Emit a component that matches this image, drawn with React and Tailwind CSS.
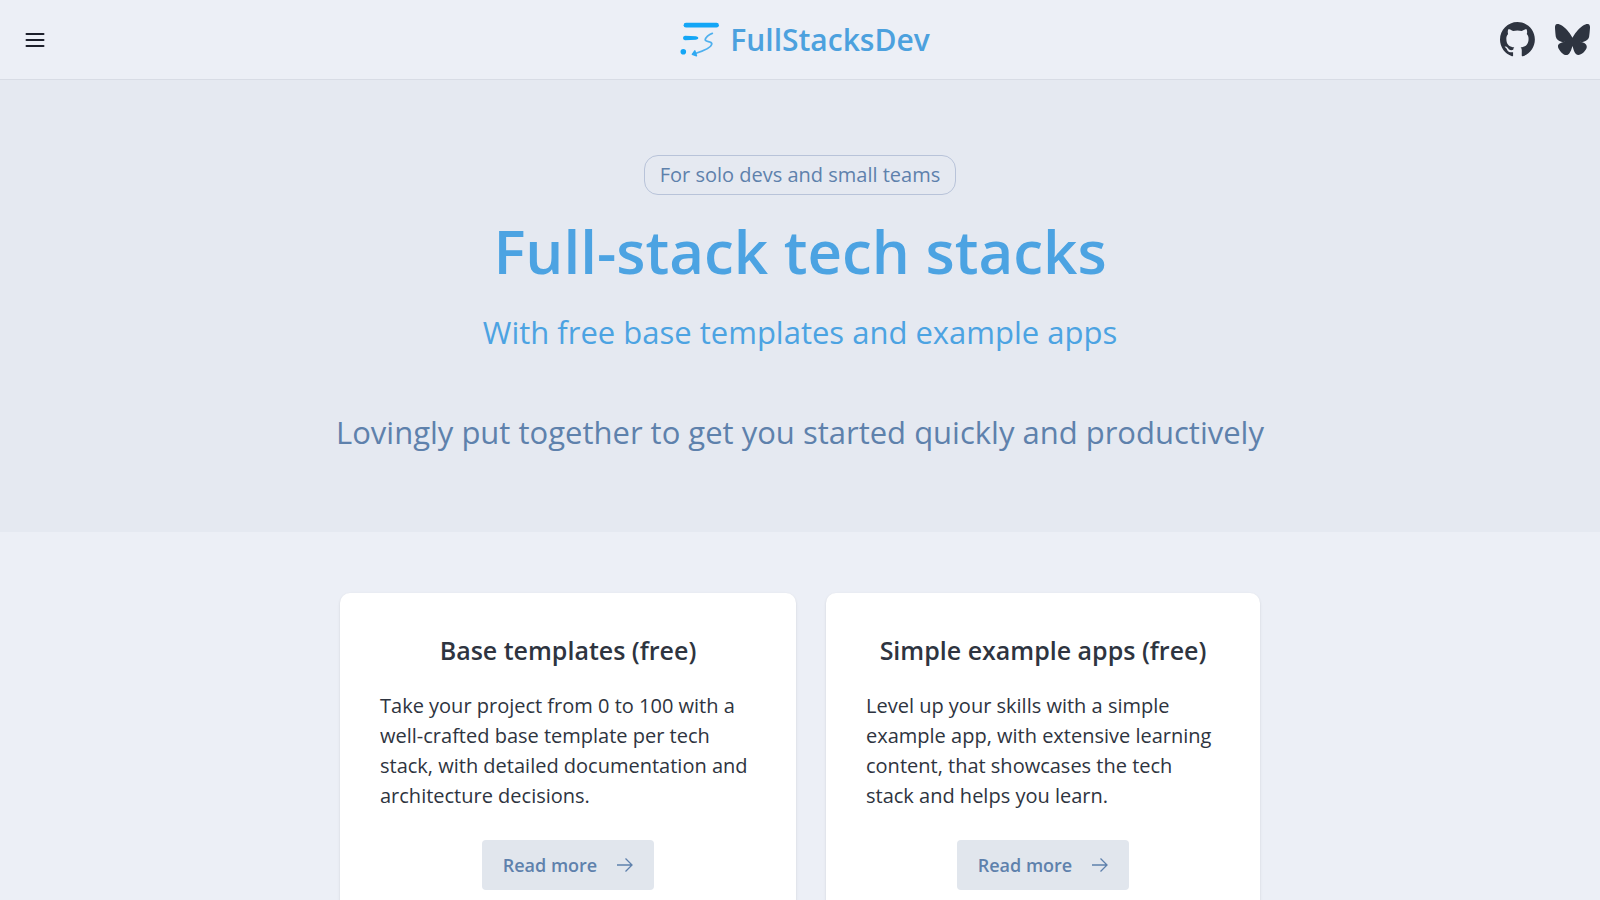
import { FaBluesky } from "react-icons/fa6";

const cards = [
  {
    title: "Base templates (free)",
    text: "Take your project from 0 to 100 with a well-crafted base template per tech stack, with detailed documentation and architecture decisions.",
  },
  {
    title: "Simple example apps (free)",
    text: "Level up your skills with a simple example app, with extensive learning content, that showcases the tech stack and helps you learn.",
  },
];

function Logo() {
  return (
    <svg viewBox="0 0 40 36" className="h-9 w-10" fill="none" strokeLinecap="round" aria-hidden="true">
      <path d="M6 3.200H36.500" stroke="#13a6f6" strokeWidth="4.800" />
      <path d="M5 13.700L16 14.300Q18.400 14.800 18.400 16Q18.400 17.200 16 17.700L5 18.200Q3 18 3 16Q3 14 5 13.700Z" fill="#13a6f6" />
      <circle cx="3.300" cy="29.800" r="2.800" fill="#13a6f6" />
      <path d="M32.300 11.300C29 12.300 25.200 15.500 25.200 18C26 20.300 31.500 18.800 31.800 21.800C31.500 26 22 29.500 14 32" stroke="#4fb0ee" strokeWidth="1.800" />
      <path d="M14.800 28.800L12.300 32.300L16.500 33.800Z" fill="#2fa9f2" stroke="#2fa9f2" strokeWidth="1.400" strokeLinejoin="round" />
    </svg>
  );
}

function GitHubMark() {
  return (
    <svg viewBox="0 0 98 98" className="size-[35px]" fill="currentColor" aria-hidden="true">
      <path
        fillRule="evenodd"
        clipRule="evenodd"
        d="M48.854 0C21.839 0 0 22 0 49.217c0 21.756 13.993 40.172 33.405 46.69 2.427.49 3.316-1.059 3.316-2.362 0-1.141-.08-5.052-.08-9.127-13.59 2.934-16.42-5.867-16.42-5.867-2.184-5.704-5.42-7.17-5.42-7.17-4.448-3.015.324-3.015.324-3.015 4.934.326 7.523 5.052 7.523 5.052 4.367 7.496 11.404 5.378 14.235 4.074.404-3.178 1.699-5.378 3.074-6.6-10.839-1.141-22.243-5.378-22.243-24.283 0-5.378 1.94-9.778 5.014-13.2-.485-1.222-2.184-6.275.486-13.038 0 0 4.125-1.304 13.426 5.052a46.97 46.97 0 0 1 12.214-1.63c4.125 0 8.33.571 12.213 1.63 9.302-6.356 13.427-5.052 13.427-5.052 2.67 6.763.97 11.816.485 13.038 3.155 3.422 5.015 7.822 5.015 13.2 0 18.905-11.404 23.06-22.324 24.283 1.78 1.548 3.316 4.481 3.316 9.126 0 6.6-.08 11.897-.08 13.526 0 1.304.89 2.853 3.316 2.364 19.412-6.52 33.405-24.935 33.405-46.691C97.707 22 75.788 0 48.854 0z"
      />
    </svg>
  );
}

function Card({ title, text }) {
  return (
    <article className="flex flex-col items-center rounded-[10px] bg-white p-10 shadow-sm">
      <h3 className="text-center text-[25px] leading-[34px] font-semibold">{title}</h3>
      <p className="mt-6 self-stretch text-xl leading-[30px]">{text}</p>
      <a href="#more" className="mt-[29px] flex h-[50px] items-center gap-5 rounded bg-[#e1e6ed] px-[21px] text-lg font-semibold text-[#5e81ac]">
        Read more
        <svg viewBox="0 0 16 16" className="size-4" fill="none" stroke="currentColor" strokeWidth="1.300" aria-hidden="true">
          <path d="M0 8H15M8.500 1.500L15 8L8.500 14.500" />
        </svg>
      </a>
    </article>
  );
}

export default function App() {
  return (
    <div className="min-h-screen bg-[#eceff6] font-['Open_Sans',sans-serif] text-[#2e3440]">
      <header className="grid h-20 grid-cols-[1fr_auto_1fr] items-center border-b border-[#d8dce5] pr-[10px] pl-5">
        <button type="button" aria-label="Open menu" className="flex size-[30px] items-center justify-center">
          <svg viewBox="0 0 20 18" className="h-[18px] w-5" stroke="#1c1f2b" strokeWidth="2" strokeLinecap="round" aria-hidden="true">
            <path d="M1.500 3H18.500M1.500 9H18.500M1.500 15H18.500" />
          </svg>
        </button>
        <a href="#home" className="flex items-center gap-[10px] text-3xl font-semibold text-[#4ca1de]">
          <Logo />
          FullStacksDev
        </a>
        <nav className="flex items-center justify-end gap-5">
          <a href="#github" aria-label="GitHub"><GitHubMark /></a>
          <a href="#bluesky" aria-label="Bluesky"><FaBluesky className="size-[35px]" /></a>
        </nav>
      </header>
      <main>
        <section className="flex flex-col items-center bg-[#e5e9f1] px-5 pt-[75px] pb-[77px] text-center">
          <p className="rounded-[14px] border border-[#b8c3d9] px-[15px] py-1 text-xl leading-[30px] font-medium text-[#5e81ac]">
            For solo devs and small teams
          </p>
          <h1 className="mt-5 text-6xl leading-[72px] font-semibold text-[#4ca3e2]">Full-stack tech stacks</h1>
          <h2 className="mt-[22px] text-[31px] leading-[46px] font-medium text-[#4ca3e2]">
            With free base templates and example apps
          </h2>
          <p className="mt-[54px] text-[31px] leading-[46px] font-medium text-[#5e81ac]">
            Lovingly put together to get you started quickly and productively
          </p>
        </section>
        <section className="mx-auto grid max-w-[920px] grid-cols-1 gap-[30px] py-[61px] md:grid-cols-[456fr_434fr]">
          {cards.map((card) => (
            <Card key={card.title} {...card} />
          ))}
        </section>
      </main>
    </div>
  );
}
